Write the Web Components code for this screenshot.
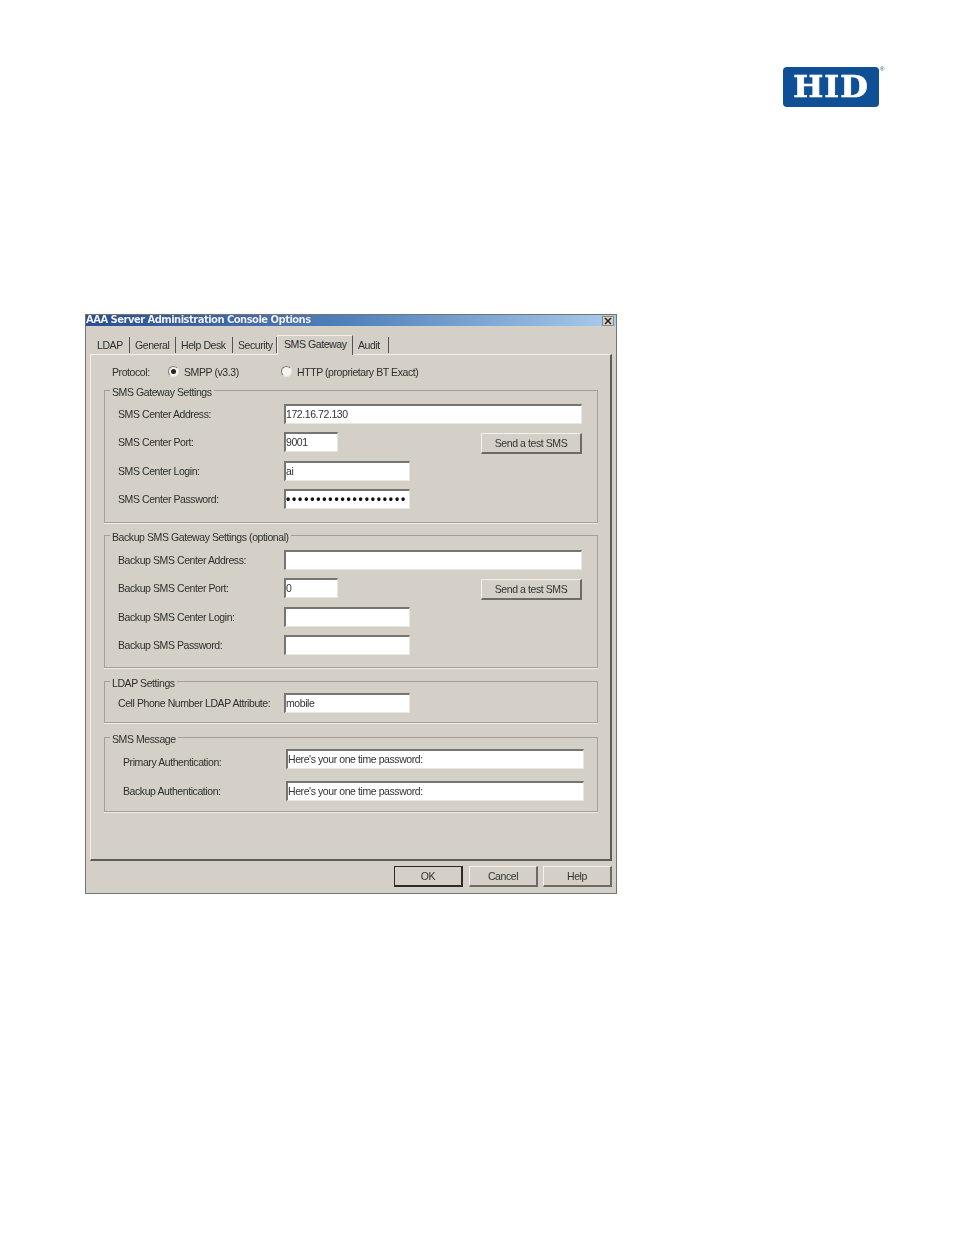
<!DOCTYPE html>
<html>
<head>
<meta charset="utf-8">
<title>AAA Server Administration Console Options</title>
<style>
  html, body { margin: 0; background: #fff; }
  body { font: 11px "Liberation Sans", Arial, sans-serif; color: #333; }
</style>
</head>
<body>
<doc-page>
  <hid-logo slot="logo"></hid-logo>
  <app-window caption="AAA Server Administration Console Options">
    <tab-bar slot="tabs">
      <win-tab w="38">LDAP</win-tab>
      <win-tab w="46">General</win-tab>
      <win-tab w="57">Help Desk</win-tab>
      <win-tab w="44">Security</win-tab>
      <win-tab w="76" active>SMS Gateway</win-tab>
      <win-tab w="36">Audit</win-tab>
    </tab-bar>

    <protocol-row>
      <win-radio checked>SMPP (v3.3)</win-radio>
      <win-radio>HTTP (proprietary BT Exact)</win-radio>
    </protocol-row>

    <group-box legend="SMS Gateway Settings" h="134" gap="0" top="3">
      <form-row label="SMS Center Address:"><win-input w="298">172.16.72.130</win-input></form-row>
      <form-row label="SMS Center Port:"><win-input w="54">9001</win-input><win-button slot="end" w="101" h="21">Send a test SMS</win-button></form-row>
      <form-row label="SMS Center Login:"><win-input w="126">ai</win-input></form-row>
      <form-row label="SMS Center Password:"><win-input w="126" secret>••••••••••••••••••••</win-input></form-row>
    </group-box>

    <group-box legend="Backup SMS Gateway Settings (optional)" h="134" gap="11" top="4">
      <form-row label="Backup SMS Center Address:"><win-input w="298"></win-input></form-row>
      <form-row label="Backup SMS Center Port:"><win-input w="54">0</win-input><win-button slot="end" w="101" h="21">Send a test SMS</win-button></form-row>
      <form-row label="Backup SMS Center Login:"><win-input w="126"></win-input></form-row>
      <form-row label="Backup SMS Password:"><win-input w="126"></win-input></form-row>
    </group-box>

    <group-box legend="LDAP Settings" h="43" gap="12" top="1">
      <form-row label="Cell Phone Number LDAP Attribute:"><win-input w="126">mobile</win-input></form-row>
    </group-box>

    <group-box legend="SMS Message" h="76" gap="13" top="-1">
      <form-row label="Primary Authentication:" inset="5" drop="6" pitch="32"><win-input w="298">Here's your one time password:</win-input></form-row>
      <form-row label="Backup Authentication:" inset="5" drop="0" pitch="32"><win-input w="298">Here's your one time password:</win-input></form-row>
    </group-box>

    <win-button slot="actions" w="69" h="21" primary>OK</win-button>
    <win-button slot="actions" w="69" h="21">Cancel</win-button>
    <win-button slot="actions" w="69" h="21">Help</win-button>
  </app-window>
</doc-page>

<script>
  function define(name, html, extra) {
    const template = document.createElement('template');
    template.innerHTML = html;
    class Element extends HTMLElement {
      constructor() {
        super();
        this.attachShadow({mode: 'open'});
        this.shadowRoot.appendChild(document.importNode(template.content, true));
      }
      connectedCallback() {
        if (extra) extra.call(this);
      }
    }
    customElements.define(name, Element);
  }

  define('doc-page', `
    <style>
      :host { display: block; width: 954px; height: 1235px; box-sizing: border-box; padding: 67px 75px 0 85px; }
      header { display: flex; justify-content: flex-end; height: 247px; }
    </style>
    <header><slot name="logo"></slot></header>
    <slot></slot>`);

  define('hid-logo', `
    <style>
      :host { display: block; position: relative; width: 96px; height: 40px; background: #0f4f95; border-radius: 4px; filter: blur(.5px); }
      b { display: flex; justify-content: center; align-items: center; height: 40px; color: #fff;
          font: 700 30px/40px "DejaVu Serif", serif; letter-spacing: 1px; transform: scale(1.06, 1); -webkit-text-stroke: .7px #fff; }
      i { position: absolute; left: 97px; top: -2px; font: 6px/8px "Liberation Sans", sans-serif; color: #234f86; }
    </style>
    <b>HID</b><i>®</i>`);

  define('app-window', `
    <style>
      :host { display: block; width: 532px; height: 580px; box-sizing: border-box; background: #d4d0c8;
              border: 1px solid #77746f; filter: blur(.6px); font: 10.5px "Liberation Sans", Arial, sans-serif; letter-spacing: -.42px; color: #2e2e2e; }
      .title { display: flex; align-items: center; justify-content: space-between; height: 11px; padding: 0 2px 0 0;
               background: linear-gradient(90deg, #2a4f94, #5182bb 50%, #a9cbec); }
      .title span { font: 700 10px/9px "DejaVu Sans", sans-serif; height: 11px; letter-spacing: -.53px; color: #f2f5fa; text-shadow: 0 0 1px #1c2f63; }
      .close { width: 12px; height: 10px; background: #d4d0c8; border: 1px solid #8a8780; box-sizing: border-box; display: flex; }
      .tabs { padding: 8px 0 0 6px; height: 20px; }
      .panel { margin-left: 4px; width: 522px; height: 507px; box-sizing: border-box; border: 1px solid #f3f1ec;
               border-right: 2px solid #5e5c58; border-bottom: 2px solid #5e5c58; padding: 0 12px 0 13px; }
      footer { display: flex; justify-content: flex-end; gap: 5px; padding: 5px 4px 0 0; }
    </style>
    <div class="title"><span id="cap"></span>
      <div class="close"><svg width="10" height="8" viewBox="0 0 10 8"><path d="M2 1l6 6M8 1L2 7" stroke="#222" stroke-width="1.5" fill="none"/></svg></div>
    </div>
    <div class="tabs"><slot name="tabs"></slot></div>
    <div class="panel"><slot></slot></div>
    <footer><slot name="actions"></slot></footer>`,
    function () { this.shadowRoot.querySelector('#cap').textContent = this.getAttribute('caption'); });

  define('tab-bar', `
    <style>:host { display: flex; height: 20px; align-items: flex-end; }</style>
    <slot></slot>`);

  define('win-tab', `
    <style>
      :host { display: block; box-sizing: border-box; height: 16px; margin-bottom: 1px; line-height: 17px; padding-left: 5px; white-space: nowrap;
              border-right: 1px solid #55534f; }
      :host([active]) { height: 20px; line-height: 16px; padding-left: 6px; border-top: 1px solid #f3f1ec;
              border-left: 1px solid #f3f1ec; background: #d4d0c8; margin-bottom: -1px; position: relative; z-index: 1; }
    </style>
    <slot></slot>`,
    function () { this.style.width = this.getAttribute('w') + 'px'; });

  define('protocol-row', `
    <style>
      :host { display: flex; align-items: center; height: 33px; margin-bottom: 1px; padding-left: 8px; }
      .lab { width: 56px; }
      ::slotted(win-radio:first-of-type) { width: 113px; }
    </style>
    <span class="lab">Protocol:</span><slot></slot>`);

  define('win-radio', `
    <style>
      :host { display: flex; align-items: center; gap: 5px; white-space: nowrap; }
      i { width: 11px; height: 11px; box-sizing: border-box; border-radius: 50%; background: #f4f3f0; border: 1px solid #7d7b76;
          border-right-color: #e8e6e1; border-bottom-color: #e8e6e1; display: flex; align-items: center; justify-content: center; }
      u { width: 5px; height: 5px; border-radius: 50%; background: #222; display: none; }
      :host([checked]) u { display: block; }
    </style>
    <i><u></u></i><span><slot></slot></span>`);

  define('group-box', `
    <style>
      :host { display: block; }
      fieldset { margin: 0; min-width: 0; box-sizing: border-box; border: 1px solid #a3a097; box-shadow: 0 1px 0 #ecebe6; padding: 0 15px 0 13px; }
      legend { padding: 0 2px; margin-left: -8px; line-height: 14px; white-space: nowrap; position: relative; top: 2px; }
    </style>
    <fieldset><legend id="leg"></legend><div id="body"><slot></slot></div></fieldset>`,
    function () {
      this.shadowRoot.querySelector('#leg').textContent = this.getAttribute('legend');
      const box = this.shadowRoot.querySelector('fieldset');
      box.style.height = (+this.getAttribute('h') + 6) + 'px';
      box.style.marginTop = (+this.getAttribute('gap') - 6) + 'px';
      this.shadowRoot.querySelector('#body').style.marginTop = this.getAttribute('top') + 'px';
    });

  define('form-row', `
    <style>
      :host { display: flex; align-items: center; height: 28.33px; }
      .lab { width: 166px; flex: none; box-sizing: border-box; white-space: nowrap; }
      .end { margin-left: auto; display: flex; padding-top: 2px; }
    </style>
    <span class="lab" id="lab"></span><slot></slot><span class="end"><slot name="end"></slot></span>`,
    function () {
      const lab = this.shadowRoot.querySelector('#lab');
      lab.textContent = this.getAttribute('label');
      if (this.hasAttribute('inset')) {
        lab.style.paddingLeft = this.getAttribute('inset') + 'px';
        lab.style.paddingTop = this.getAttribute('drop') + 'px';
        lab.style.width = '168px';
      }
      if (this.hasAttribute('pitch')) this.style.height = this.getAttribute('pitch') + 'px';
    });

  define('win-input', `
    <style>
      :host { display: block; flex: none; box-sizing: border-box; height: 20px; line-height: 17px; padding-left: 0; background: #fff; white-space: nowrap; overflow: hidden;
              border: 2px solid #77756f; border-right: 1px solid #e9e7e2; border-bottom: 1px solid #e9e7e2; color: #333; }
      :host([secret]) { font-size: 12px; font-weight: 700; letter-spacing: 1.85px; color: #111; }
    </style>
    <slot></slot>`,
    function () { this.style.width = this.getAttribute('w') + 'px'; });

  define('win-button', `
    <style>
      :host { display: flex; align-items: center; justify-content: center; box-sizing: border-box; background: #d4d0c8; white-space: nowrap;
              border: 1px solid #f3f1ec; border-right: 2px solid #6d6b66; border-bottom: 2px solid #6d6b66; color: #333; }
      :host([primary]) { border: 2px solid #2c2b29; border-top-width: 1px; border-left-width: 1px; margin-right: 1px; }
    </style>
    <slot></slot>`,
    function () {
      this.style.width = this.getAttribute('w') + 'px';
      this.style.height = this.getAttribute('h') + 'px';
    });
</script>
</body>
</html>
